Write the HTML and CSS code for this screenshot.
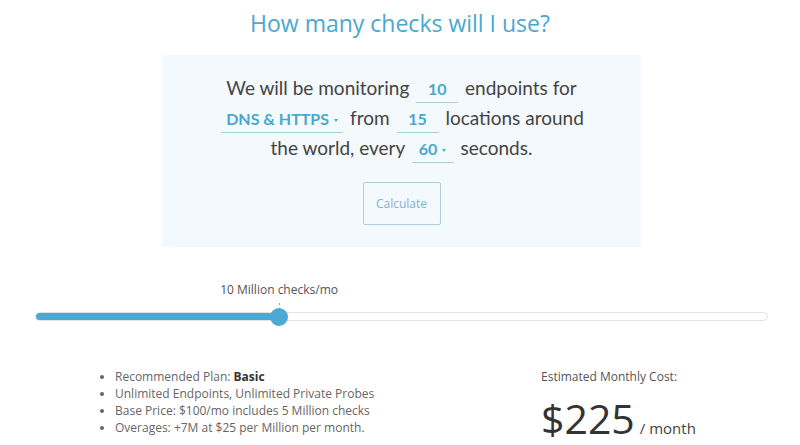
FILE: index.html
```html
<!DOCTYPE html>
<html lang="en">
<head>
  <meta charset="UTF-8">
  <title>Pricing calculator</title>
  <link rel="stylesheet" href="styles.css">
</head>
<body>
  <h2 class="title">How many checks will I use?</h2>
  <div class="calc-box">
    <p class="sentence">
      We will be monitoring <span class="field field-num">10</span> endpoints for<br>
      <span class="field field-select field-wide">DNS &amp; HTTPS <i class="caret"></i></span> from <span class="field field-num">15</span> locations around<br>
      the world, every <span class="field field-select">60 <i class="caret"></i></span> seconds.
    </p>
    <button class="calc-btn">Calculate</button>
  </div>

  <div class="slider">
    <div class="slider-label" style="left: 33.3%">10 Million checks/mo</div>
    <div class="track">
      <div class="track-fill" style="width: 33.3%"></div>
      <div class="thumb" style="left: 33.3%"></div>
    </div>
  </div>

  <div class="results">
    <ul class="plan-list">
      <li>Recommended Plan: <b>Basic</b></li>
      <li>Unlimited Endpoints, Unlimited Private Probes</li>
      <li>Base Price: $100/mo includes 5 Million checks</li>
      <li>Overages: +7M at $25 per Million per month.</li>
    </ul>
    <div class="cost">
      <div class="cost-label">Estimated Monthly Cost:</div>
      <div class="cost-value">$225<span class="per">/ month</span></div>
    </div>
  </div>
</body>
</html>
```

FILE: styles.css
```css
body {
  margin: 0;
  font-family: "Open Sans", sans-serif;
  color: #555;
  background: #fff;
}
.title {
  margin: 7px 0 0;
  text-align: center;
  font-size: 23px;
  font-weight: 400;
  color: #4aa8cf;
  line-height: 32px;
}
.calc-box {
  width: 479px;
  height: 192px;
  margin: 16px 0 0 162px;
  background: #f3f9fc;
  text-align: center;
  padding-top: 18px;
  box-sizing: border-box;
}
.sentence {
  margin: 0;
  font-family: Lato, sans-serif;
  font-size: 19px;
  line-height: 30px;
  color: #444;
}
.field {
  display: inline-block;
  border-bottom: 1px solid #a9cfe0;
  color: #4aa8cf;
  font-weight: 700;
  font-size: 16px;
  line-height: 26px;
  padding: 0 4px;
  margin: 0 2px;
}
.field-num {
  width: 34px;
}
.field-select {
  width: 31px;
  text-align: left;
  padding-left: 7px;
}
.field-wide {
  width: 113px;
  padding-left: 5px;
}
.caret {
  display: inline-block;
  width: 0;
  height: 0;
  border-left: 2.5px solid transparent;
  border-right: 2.5px solid transparent;
  border-top: 3px solid #4aa8cf;
  vertical-align: middle;
  margin-left: 1px;
}
.calc-btn {
  margin-top: 19px;
  width: 78px;
  height: 43px;
  border: 1px solid #a9cfe0;
  border-radius: 2px;
  background: transparent;
  color: #7fb5cf;
  font-family: "Open Sans", sans-serif;
  font-size: 12px;
}
.slider {
  position: relative;
  margin: 34px 32px 0 35px;
  padding-top: 31px;
}
.slider-label {
  position: absolute;
  top: 0;
  transform: translateX(-50%);
  font-size: 12px;
  color: #555;
  white-space: nowrap;
}
.slider-label::after {
  content: "";
  position: absolute;
  left: 50%;
  top: 22px;
  width: 1px;
  height: 2px;
  background: #999;
}
.track {
  position: relative;
  height: 7px;
  border: 1px solid #e2e2e2;
  border-radius: 5px;
  background: #fff;
}
.track-fill {
  height: 100%;
  background: #4ca9d3;
  border-radius: 5px 0 0 5px;
}
.thumb {
  position: absolute;
  top: 50%;
  width: 18px;
  height: 18px;
  border-radius: 50%;
  background: #4ca9d3;
  transform: translate(-50%, -50%);
}
.results {
  display: flex;
  margin-top: 47px;
  padding-left: 100px;
}
.plan-list {
  margin: 0;
  padding-left: 15px;
  width: 426px;
  font-size: 12px;
  line-height: 17px;
  color: #666;
}
.plan-list b {
  color: #333;
}
.cost-label {
  font-size: 12px;
  color: #555;
  line-height: 17px;
}
.cost-value {
  margin-top: 10px;
  font-size: 41px;
  line-height: 46px;
  color: #333;
}
.per {
  margin-left: 5px;
  font-size: 15px;
  color: #444;
}
```
